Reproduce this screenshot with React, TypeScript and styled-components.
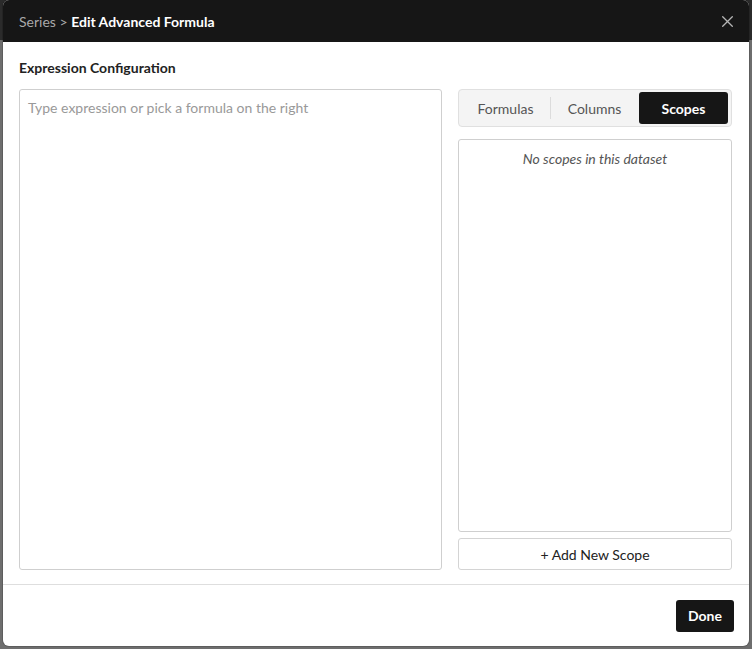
import styled, { createGlobalStyle } from 'styled-components';

const GlobalStyle = createGlobalStyle`
  html, body {
    margin: 0;
    padding: 0;
  }
  body {
    width: 752px;
    height: 649px;
    overflow: hidden;
    background: linear-gradient(to bottom, #2b2b2b 0, #2b2b2b 40px, #6e6e6e 40px);
    font-family: Lato, "Open Sans", "Liberation Sans", sans-serif;
  }
`;

const tabs = ['Formulas', 'Columns', 'Scopes'];
const activeTab = 'Scopes';

const CloseIcon = () => (
  <svg width="11" height="11" viewBox="0 0 11 11" fill="none">
    <path d="M0.7 0.7L10.3 10.3M10.3 0.7L0.7 10.3" stroke="#b5b5b5" strokeWidth="1.3" strokeLinecap="round" />
  </svg>
);

const App = () => (
  <>
    <GlobalStyle />
    <Backdrop>
      <Modal>
        <Header>
          <Title>
            <Crumb>Series &gt; </Crumb>
            Edit Advanced Formula
          </Title>
          <CloseButton aria-label="Close">
            <CloseIcon />
          </CloseButton>
        </Header>
        <Body>
          <SectionTitle>Expression Configuration</SectionTitle>
          <Columns>
            <Expression placeholder="Type expression or pick a formula on the right" />
            <Side>
              <TabBar>
                {tabs.map((t, i) => (
                  <Tab
                    key={t}
                    $active={t === activeTab}
                    $divider={i > 0 && t !== activeTab && tabs[i - 1] !== activeTab}
                  >
                    {t}
                  </Tab>
                ))}
              </TabBar>
              <ScopeList>
                <Empty>No scopes in this dataset</Empty>
              </ScopeList>
              <AddButton>+ Add New Scope</AddButton>
            </Side>
          </Columns>
        </Body>
        <Footer>
          <DoneButton>Done</DoneButton>
        </Footer>
      </Modal>
    </Backdrop>
  </>
);

const Backdrop = styled.div`
  display: flex;
  padding: 0 3px;
  height: 649px;
  box-sizing: border-box;
`;

const Modal = styled.div`
  display: flex;
  flex-direction: column;
  width: 746px;
  height: 646px;
  background: #fff;
  border-radius: 6px;
  overflow: hidden;
  box-shadow: 0 0 0 1px rgba(0, 0, 0, 0.15);
`;

const Header = styled.div`
  display: flex;
  align-items: center;
  justify-content: space-between;
  height: 42px;
  padding: 0 12px 0 16px;
  background: #161616;
  flex-shrink: 0;
`;

const Title = styled.div`
  font-size: 14px;
  font-weight: 700;
  color: #fff;
`;

const Crumb = styled.span`
  font-weight: 400;
  color: #a9a9a9;
`;

const CloseButton = styled.button`
  display: flex;
  align-items: center;
  justify-content: center;
  width: 20px;
  height: 20px;
  padding: 0;
  border: none;
  background: none;
  cursor: pointer;
`;

const Body = styled.div`
  display: flex;
  flex-direction: column;
  flex: 1;
  min-height: 0;
  padding: 15px 17px 14px 16px;
`;

const SectionTitle = styled.div`
  font-size: 14px;
  font-weight: 700;
  line-height: 22px;
  color: #222;
  margin-bottom: 10px;
`;

const Columns = styled.div`
  display: flex;
  gap: 16px;
  flex: 1;
  min-height: 0;
`;

const Expression = styled.textarea`
  flex: 1;
  resize: none;
  margin: 0;
  padding: 8px;
  border: 1px solid #cfcfcf;
  border-radius: 3px;
  font-family: Lato, "Open Sans", "Liberation Sans", sans-serif;
  font-size: 14px;
  line-height: 20px;
  color: #222;
  outline: none;

  &::placeholder {
    color: #999;
  }
`;

const Side = styled.div`
  display: flex;
  flex-direction: column;
  width: 274px;
  flex-shrink: 0;
`;

const TabBar = styled.div`
  display: grid;
  grid-template-columns: repeat(3, 1fr);
  height: 38px;
  padding: 2px 3px 2px 2px;
  box-sizing: border-box;
  background: #f4f4f4;
  border: 1px solid #e0e0e0;
  border-radius: 4px;
  margin-bottom: 12px;
`;

const Tab = styled.div<{ $active?: boolean; $divider?: boolean }>`
  position: relative;
  display: flex;
  align-items: center;
  justify-content: center;
  font-size: 14px;
  font-weight: ${p => (p.$active ? 700 : 400)};
  color: ${p => (p.$active ? '#fff' : '#555')};
  background: ${p => (p.$active ? '#161616' : 'transparent')};
  border-radius: 3px;
  cursor: pointer;

  &::before {
    content: '';
    display: ${p => (p.$divider ? 'block' : 'none')};
    position: absolute;
    left: 0;
    top: 5px;
    bottom: 5px;
    width: 1px;
    background: #dcdcdc;
  }
`;

const ScopeList = styled.div`
  flex: 1;
  border: 1px solid #cfcfcf;
  border-radius: 3px;
  padding: 10px 8px;
  margin-bottom: 6px;
`;

const Empty = styled.div`
  text-align: center;
  font-size: 14px;
  font-style: italic;
  color: #555;
  line-height: 18px;
`;

const AddButton = styled.button`
  height: 32px;
  border: 1px solid #d4d4d4;
  border-radius: 3px;
  background: #fff;
  font-family: Lato, "Open Sans", "Liberation Sans", sans-serif;
  font-size: 14px;
  color: #222;
  cursor: pointer;
`;

const Footer = styled.div`
  display: flex;
  justify-content: flex-end;
  align-items: center;
  height: 62px;
  padding: 0 15px;
  border-top: 1px solid #dedede;
  flex-shrink: 0;
  box-sizing: border-box;
`;

const DoneButton = styled.button`
  height: 32px;
  padding: 0 12px;
  border: none;
  border-radius: 3px;
  background: #161616;
  color: #fff;
  font-family: Lato, "Open Sans", "Liberation Sans", sans-serif;
  font-size: 14px;
  font-weight: 700;
  cursor: pointer;
`;

export default App;
